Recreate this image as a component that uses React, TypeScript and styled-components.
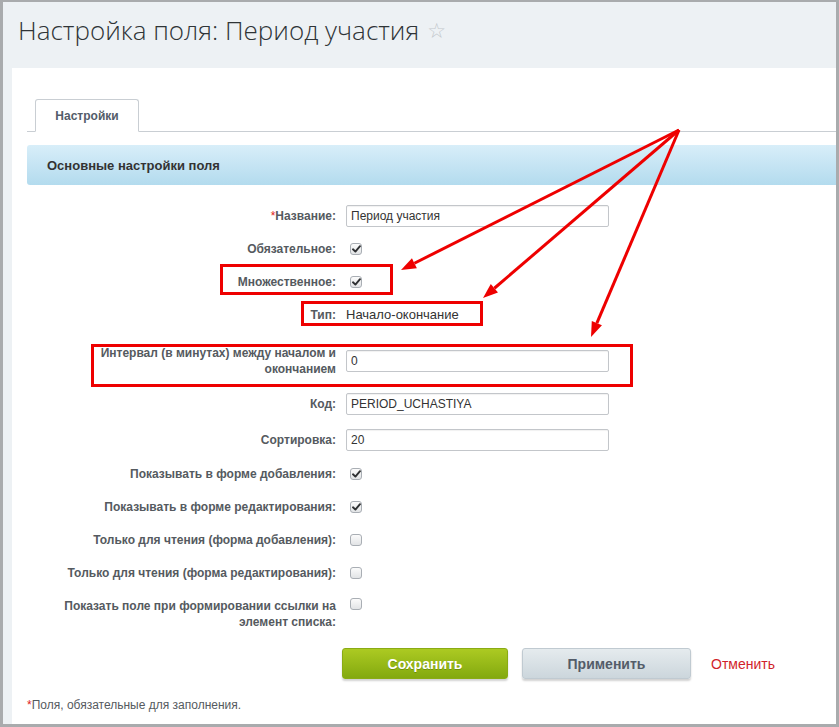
import React from "react";
import styled, { createGlobalStyle } from "styled-components";

const GlobalStyle = createGlobalStyle`
  html, body {
    margin: 0;
    padding: 0;
    background: #ffffff;
  }
  * {
    box-sizing: border-box;
  }
`;

const Frame = styled.div`
  position: relative;
  width: 839px;
  height: 727px;
  overflow: hidden;
  display: flex;
  flex-direction: column;
  background: #edf1f4;
  border: 3px solid #a9abad;
  border-top-width: 2px;
  font-family: "Liberation Sans", Arial, sans-serif;
`;

const TitleBar = styled.div`
  height: 66px;
  display: flex;
  align-items: center;
  padding: 0 0 10px 15px;
`;

const Title = styled.h1`
  margin: 0;
  font-family: "Open Sans", "Liberation Sans", sans-serif;
  font-weight: 300;
  font-size: 26px;
  color: #2f3437;
`;

const Star = styled.span`
  margin-left: 8px;
  font-family: "DejaVu Sans", sans-serif;
  font-size: 21px;
  color: #c3c8cc;
  position: relative;
  top: 1px;
`;

const Panel = styled.div`
  flex: 1;
  margin-left: 9px;
  background: #ffffff;
  padding-top: 31px;
`;

const TabBar = styled.div`
  margin-left: 15px;
  display: flex;
  border-bottom: 1px solid #c9ced3;
`;

const Tab = styled.div`
  margin-left: 8px;
  margin-bottom: -1px;
  width: 104px;
  height: 33px;
  display: flex;
  align-items: center;
  justify-content: center;
  background: #ffffff;
  border: 1px solid #c9ced3;
  border-bottom: 1px solid #ffffff;
  border-radius: 3px 3px 0 0;
  font-size: 12px;
  font-weight: bold;
  color: #535c69;
`;

const SectionHeader = styled.div`
  margin: 13px 0 0 15px;
  height: 40px;
  display: flex;
  align-items: center;
  padding-left: 20px;
  border-radius: 3px 0 0 3px;
  background: linear-gradient(#d8eef9, #b3dbee);
  font-size: 13px;
  font-weight: bold;
  color: #333333;
`;

const Form = styled.div`
  margin: 14px 0 0 44px;
  display: flex;
  flex-direction: column;
`;

const Row = styled.div<{ $pad?: string; $top?: boolean }>`
  box-sizing: content-box;
  display: grid;
  grid-template-columns: 280px 263px;
  column-gap: 10px;
  align-items: ${(p) => (p.$top ? "start" : "center")};
  min-height: 23px;
  padding: ${(p) => p.$pad ?? "5px 0"};
`;

const Label = styled.div`
  text-align: right;
  font-size: 12px;
  font-weight: bold;
  line-height: 16px;
  color: #555a60;
`;

const Req = styled.span`
  color: #e02020;
  font-weight: normal;
`;

const Value = styled.div`
  font-size: 13px;
  color: #333333;
  line-height: 16px;
`;

const TextInput = styled.input`
  display: block;
  width: 263px;
  height: 22px;
  margin: 0;
  padding: 0 4px;
  border: 1px solid #c3c6ca;
  border-radius: 2px;
  box-shadow: inset 0 1px 1px rgba(0, 0, 0, 0.06);
  font-family: "Liberation Sans", Arial, sans-serif;
  font-size: 12px;
  color: #333333;
  background: #ffffff;
  outline: none;
`;

const Box = styled.span`
  display: flex;
  align-items: center;
  justify-content: center;
  width: 12px;
  height: 12px;
  margin-left: 4px;
  border: 1px solid #a9aeb4;
  border-radius: 3px;
  background: linear-gradient(#fbfbfb, #e2e4e6);
`;

const Check = ({ on }: { on?: boolean }) => (
  <Box>
    {on && (
      <svg width="9" height="8" viewBox="0 0 9 8">
        <path
          d="M1 4.3 L3.4 6.6 L8 1.2"
          fill="none"
          stroke="#2f3133"
          strokeWidth="1.9"
          strokeLinecap="round"
          strokeLinejoin="round"
        />
      </svg>
    )}
  </Box>
);

const Buttons = styled.div`
  display: flex;
  align-items: center;
  margin: 13px 0 0 330px;
`;

const Button = styled.button<{ $primary?: boolean }>`
  height: 31px;
  width: ${(p) => (p.$primary ? "166px" : "169px")};
  margin-right: ${(p) => (p.$primary ? "14px" : "20px")};
  border-radius: 3px;
  font-family: "Liberation Sans", Arial, sans-serif;
  font-size: 14px;
  font-weight: bold;
  cursor: pointer;
  border: 1px solid ${(p) => (p.$primary ? "#8aab14" : "#c0cad1")};
  color: ${(p) => (p.$primary ? "#ffffff" : "#535c69")};
  text-shadow: ${(p) => (p.$primary ? "0 1px 0 rgba(80,110,0,0.5)" : "none")};
  background: ${(p) =>
    p.$primary
      ? "linear-gradient(#acca22, #83a90f)"
      : "linear-gradient(#e5ebee, #ccd6dc)"};
  box-shadow: 0 2px 2px rgba(0, 0, 0, 0.18);
`;

const CancelLink = styled.a`
  font-size: 14px;
  color: #d11f2b;
  text-decoration: none;
`;

const Note = styled.div`
  margin: 18px 0 0 15px;
  font-size: 12px;
  line-height: 16px;
  color: #555a60;
`;

const Overlay = styled.svg`
  position: absolute;
  left: -3px;
  top: -2px;
  pointer-events: none;
`;

const RED = "#ee0000";

const arrows = [
  [679, 130, 401, 270],
  [679, 130, 483, 298],
  [679, 130, 591, 337],
];

const head = (x1: number, y1: number, x2: number, y2: number) => {
  const dx = x2 - x1;
  const dy = y2 - y1;
  const len = Math.hypot(dx, dy);
  const ux = dx / len;
  const uy = dy / len;
  const bx = x2 - ux * 15;
  const by = y2 - uy * 15;
  const px = -uy * 5.5;
  const py = ux * 5.5;
  return {
    bx,
    by,
    points: `${x2},${y2} ${bx + px},${by + py} ${bx - px},${by - py}`,
  };
};

const Annotations = () => (
  <Overlay width="839" height="727" viewBox="0 0 839 727">
    <rect x="221.5" y="265.5" width="170" height="28" fill="none" stroke={RED} strokeWidth="3" />
    <rect x="302.5" y="302.5" width="179" height="22" fill="none" stroke={RED} strokeWidth="3" />
    <rect x="92.5" y="345.5" width="539" height="40" fill="none" stroke={RED} strokeWidth="3" />
    {arrows.map(([x1, y1, x2, y2], i) => {
      const h = head(x1, y1, x2, y2);
      return (
        <g key={i}>
          <line x1={x1} y1={y1} x2={h.bx} y2={h.by} stroke={RED} strokeWidth="3" />
          <polygon points={h.points} fill={RED} />
        </g>
      );
    })}
  </Overlay>
);

export default function App() {
  return (
    <>
      <GlobalStyle />
      <Frame>
        <TitleBar>
          <Title>Настройка поля: Период участия</Title>
          <Star>☆</Star>
        </TitleBar>
        <Panel>
          <TabBar>
            <Tab>Настройки</Tab>
          </TabBar>
          <SectionHeader>Основные настройки поля</SectionHeader>
          <Form>
            <Row>
              <Label>
                <Req>*</Req>Название:
              </Label>
              <TextInput defaultValue="Период участия" />
            </Row>
            <Row>
              <Label>Обязательное:</Label>
              <Check on />
            </Row>
            <Row>
              <Label>Множественное:</Label>
              <Check on />
            </Row>
            <Row $pad="5px 0 4px">
              <Label>Тип:</Label>
              <Value>Начало-окончание</Value>
            </Row>
            <Row $pad="15px 0 11px">
              <Label>Интервал (в минутах) между началом и окончанием</Label>
              <TextInput defaultValue="0" />
            </Row>
            <Row $pad="4px 0 6px">
              <Label>Код:</Label>
              <TextInput defaultValue="PERIOD_UCHASTIYA" />
            </Row>
            <Row $pad="7px 0 6px">
              <Label>Сортировка:</Label>
              <TextInput defaultValue="20" />
            </Row>
            <Row>
              <Label>Показывать в форме добавления:</Label>
              <Check on />
            </Row>
            <Row>
              <Label>Показывать в форме редактирования:</Label>
              <Check on />
            </Row>
            <Row>
              <Label>Только для чтения (форма добавления):</Label>
              <Check />
            </Row>
            <Row>
              <Label>Только для чтения (форма редактирования):</Label>
              <Check />
            </Row>
            <Row $top $pad="9px 0 5px">
              <Label>Показать поле при формировании ссылки на элемент списка:</Label>
              <Check />
            </Row>
          </Form>
          <Buttons>
            <Button $primary>Сохранить</Button>
            <Button>Применить</Button>
            <CancelLink href="#">Отменить</CancelLink>
          </Buttons>
          <Note>
            <Req>*</Req>Поля, обязательные для заполнения.
          </Note>
        </Panel>
        <Annotations />
      </Frame>
    </>
  );
}
